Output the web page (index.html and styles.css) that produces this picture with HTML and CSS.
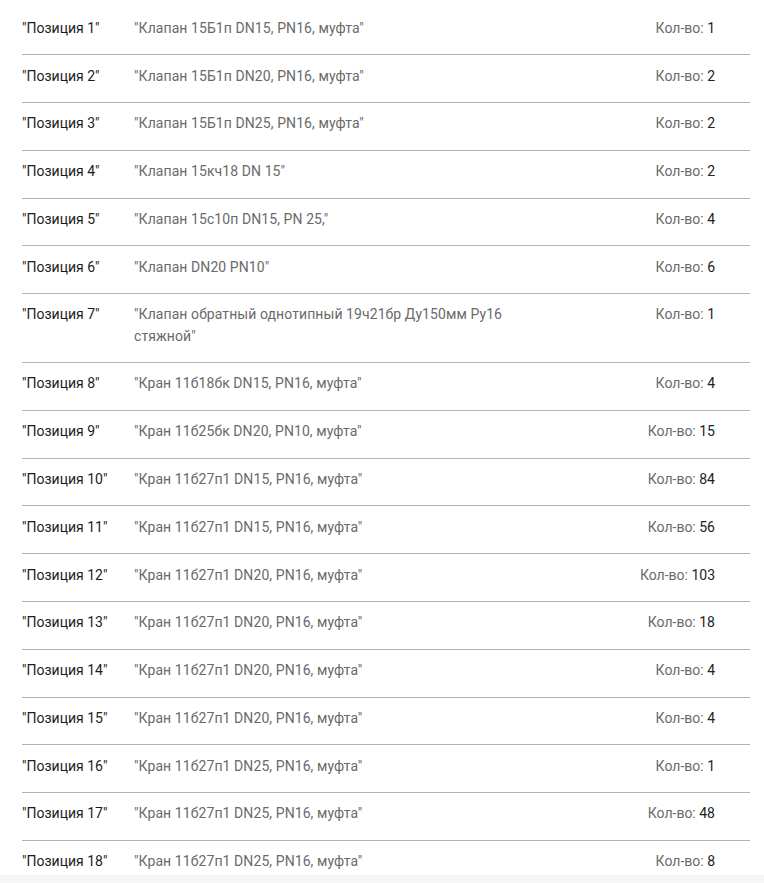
FILE: index.html
```html
<!DOCTYPE html>
<html lang="ru">
<head>
<meta charset="utf-8">
<link rel="stylesheet" href="styles.css">
</head>
<body>
<div class="list">
  <div class="row"><div class="name">"Позиция 1"</div><div class="desc">"Клапан 15Б1п DN15, PN16, муфта"</div><div class="qty">Кол-во: <span class="num">1</span></div></div>
  <div class="row"><div class="name">"Позиция 2"</div><div class="desc">"Клапан 15Б1п DN20, PN16, муфта"</div><div class="qty">Кол-во: <span class="num">2</span></div></div>
  <div class="row"><div class="name">"Позиция 3"</div><div class="desc">"Клапан 15Б1п DN25, PN16, муфта"</div><div class="qty">Кол-во: <span class="num">2</span></div></div>
  <div class="row"><div class="name">"Позиция 4"</div><div class="desc">"Клапан 15кч18 DN 15"</div><div class="qty">Кол-во: <span class="num">2</span></div></div>
  <div class="row"><div class="name">"Позиция 5"</div><div class="desc">"Клапан 15с10п DN15, PN 25,"</div><div class="qty">Кол-во: <span class="num">4</span></div></div>
  <div class="row"><div class="name">"Позиция 6"</div><div class="desc">"Клапан DN20 PN10"</div><div class="qty">Кол-во: <span class="num">6</span></div></div>
  <div class="row"><div class="name">"Позиция 7"</div><div class="desc">"Клапан обратный однотипный 19ч21бр Ду150мм Ру16 стяжной"</div><div class="qty">Кол-во: <span class="num">1</span></div></div>
  <div class="row"><div class="name">"Позиция 8"</div><div class="desc">"Кран 11б18бк DN15, PN16, муфта"</div><div class="qty">Кол-во: <span class="num">4</span></div></div>
  <div class="row"><div class="name">"Позиция 9"</div><div class="desc">"Кран 11б25бк DN20, PN10, муфта"</div><div class="qty">Кол-во: <span class="num">15</span></div></div>
  <div class="row"><div class="name">"Позиция 10"</div><div class="desc">"Кран 11б27п1 DN15, PN16, муфта"</div><div class="qty">Кол-во: <span class="num">84</span></div></div>
  <div class="row"><div class="name">"Позиция 11"</div><div class="desc">"Кран 11б27п1 DN15, PN16, муфта"</div><div class="qty">Кол-во: <span class="num">56</span></div></div>
  <div class="row"><div class="name">"Позиция 12"</div><div class="desc">"Кран 11б27п1 DN20, PN16, муфта"</div><div class="qty">Кол-во: <span class="num">103</span></div></div>
  <div class="row"><div class="name">"Позиция 13"</div><div class="desc">"Кран 11б27п1 DN20, PN16, муфта"</div><div class="qty">Кол-во: <span class="num">18</span></div></div>
  <div class="row"><div class="name">"Позиция 14"</div><div class="desc">"Кран 11б27п1 DN20, PN16, муфта"</div><div class="qty">Кол-во: <span class="num">4</span></div></div>
  <div class="row"><div class="name">"Позиция 15"</div><div class="desc">"Кран 11б27п1 DN20, PN16, муфта"</div><div class="qty">Кол-во: <span class="num">4</span></div></div>
  <div class="row"><div class="name">"Позиция 16"</div><div class="desc">"Кран 11б27п1 DN25, PN16, муфта"</div><div class="qty">Кол-во: <span class="num">1</span></div></div>
  <div class="row"><div class="name">"Позиция 17"</div><div class="desc">"Кран 11б27п1 DN25, PN16, муфта"</div><div class="qty">Кол-во: <span class="num">48</span></div></div>
  <div class="row"><div class="name">"Позиция 18"</div><div class="desc">"Кран 11б27п1 DN25, PN16, муфта"</div><div class="qty">Кол-во: <span class="num">8</span></div></div>
</div>
<div class="bottom-bar"></div>
</body>
</html>
```
FILE: styles.css
```css
html, body {
  margin: 0;
  padding: 0;
  background: #ffffff;
  overflow: hidden;
}
body {
  font-family: Roboto, "Noto Sans", sans-serif;
  font-size: 14px;
  color: #212121;
}
.list {
  margin: 0 14px 0 22px;
  padding-top: 7.4px;
}
.row {
  display: grid;
  grid-template-columns: 112px 400px 1fr;
  padding: 10.4px 35px 15.2px 0;
  line-height: 21.2px;
  border-bottom: 1px solid #aeb5bc;
}
.name {
  color: #1c1c1c;
}
.desc {
  color: #6a6a6a;
  letter-spacing: 0.08px;
}
.qty {
  text-align: right;
  color: #6a6a6a;
}
.num {
  color: #222222;
}
.bottom-bar {
  position: fixed;
  left: 0;
  right: 0;
  bottom: 0;
  height: 8px;
  background: #f6f6f6;
}
```
